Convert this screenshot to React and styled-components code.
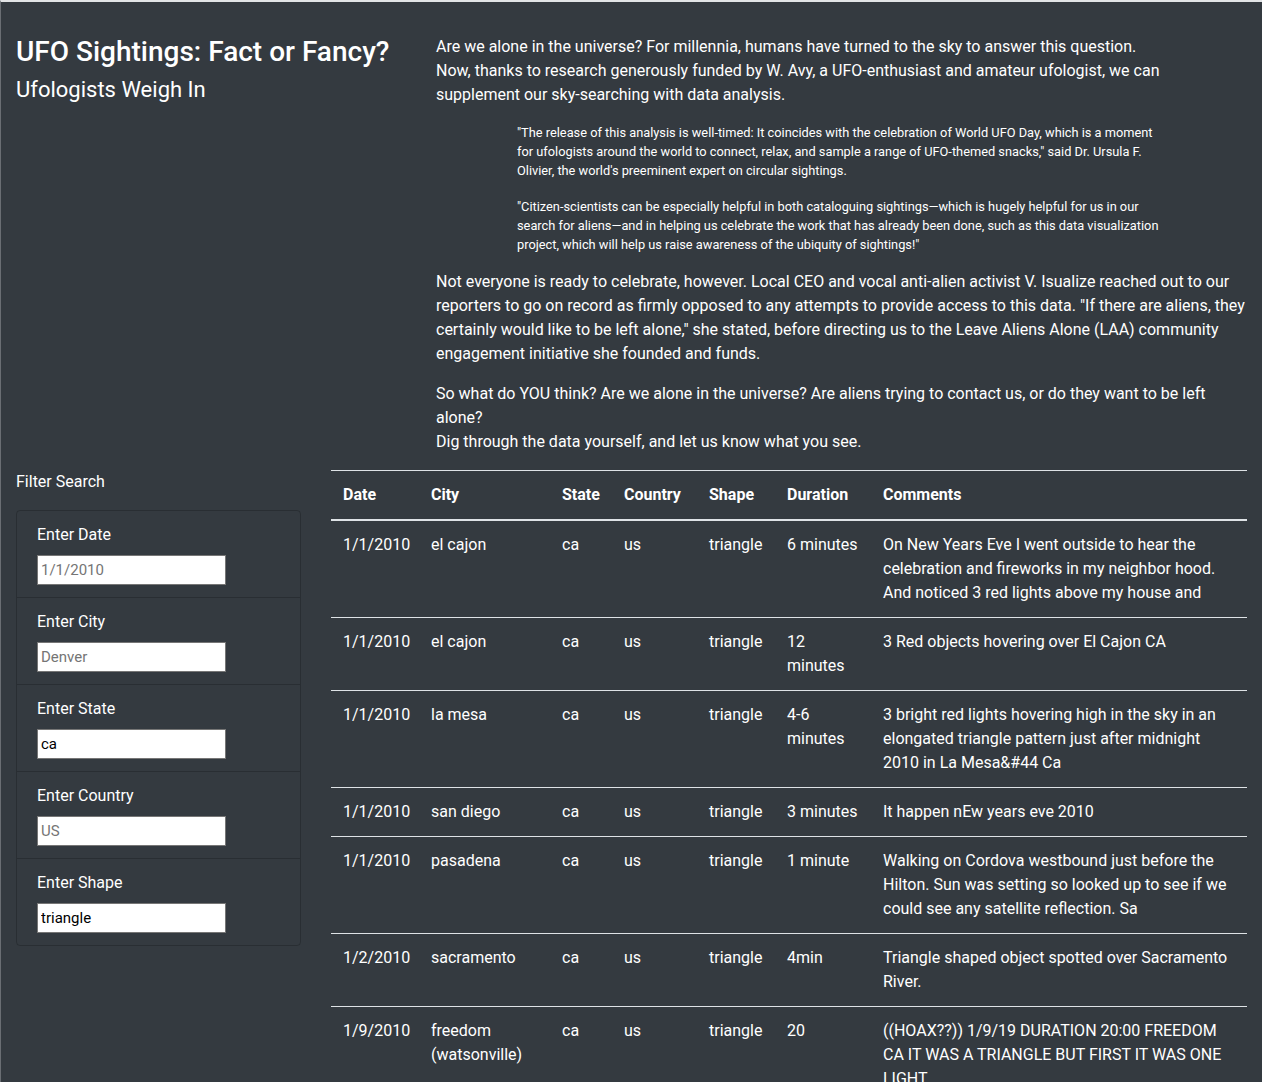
import React from 'react';
import styled, { createGlobalStyle } from 'styled-components';

const GlobalStyle = createGlobalStyle`
  html, body {
    margin: 0;
    padding: 0;
  }
  body {
    background: #343a40;
    color: #fff;
    font-family: Roboto, "Liberation Sans", sans-serif;
    font-size: 16px;
    line-height: 1.5;
    border-top: 2px solid #e2e4e6;
    border-left: 1px solid #6a6e73;
    min-height: 1080px;
    box-sizing: border-box;
  }
  * {
    box-sizing: border-box;
  }
`;

const Page = styled.div`
  padding: 33px 15px 0;
`;

const Row = styled.div`
  display: grid;
  grid-template-columns: ${(p) => p.cols};
  column-gap: 30px;
`;

const Title = styled.h1`
  margin: 0 0 8px;
  font-size: 28px;
  font-weight: 500;
  line-height: 1.2;
`;

const Subtitle = styled.h2`
  margin: 0;
  font-size: 22px;
  font-weight: 400;
  line-height: 1.2;
`;

const Para = styled.p`
  margin: 0 0 16px;
`;

const Quote = styled.blockquote`
  margin: 0 0 16px 81px;
  max-width: 651px;
  font-size: 12.8px;
  line-height: 19.2px;

  p {
    margin: 0 0 16px;
  }
  p:last-child {
    margin-bottom: 0;
  }
`;

const FilterTitle = styled.div`
  margin-bottom: 16px;
`;

const Card = styled.div`
  border: 1px solid rgba(0, 0, 0, 0.2);
  border-radius: 4px;
`;

const FilterItem = styled.div`
  padding: 12px 20px;
  border-bottom: 1px solid rgba(0, 0, 0, 0.2);

  &:last-child {
    border-bottom: none;
  }
`;

const Label = styled.label`
  display: block;
  margin-bottom: 8px;
`;

const Input = styled.input`
  display: block;
  width: 189px;
  height: 30px;
  padding: 1px 3px;
  border: 1px solid #767676;
  background: #fff;
  color: #000;
  font-family: inherit;
  font-size: 15px;
  outline: none;

  &::placeholder {
    color: #757575;
  }
`;

const Table = styled.table`
  width: 100%;
  border-collapse: collapse;
  table-layout: fixed;
`;

const Th = styled.th`
  padding: 12px;
  text-align: left;
  vertical-align: bottom;
  font-weight: 700;
  border-top: 1px solid #dee2e6;
  border-bottom: 2px solid #dee2e6;
`;

const Td = styled.td`
  padding: 12px;
  vertical-align: top;
  border-top: 1px solid #dee2e6;
`;

const columns = [
  { name: 'Date', width: 88 },
  { name: 'City', width: 131 },
  { name: 'State', width: 62 },
  { name: 'Country', width: 85 },
  { name: 'Shape', width: 78 },
  { name: 'Duration', width: 96 },
  { name: 'Comments', width: 376 },
];

const sightings = [
  ['1/1/2010', 'el cajon', 'ca', 'us', 'triangle', '6 minutes', 'On New Years Eve I went outside to hear the celebration and fireworks in my neighbor hood. And noticed 3 red lights above my house and'],
  ['1/1/2010', 'el cajon', 'ca', 'us', 'triangle', '12 minutes', '3 Red objects hovering over El Cajon CA'],
  ['1/1/2010', 'la mesa', 'ca', 'us', 'triangle', '4-6 minutes', '3 bright red lights hovering high in the sky in an elongated triangle pattern just after midnight 2010 in La Mesa&#44 Ca'],
  ['1/1/2010', 'san diego', 'ca', 'us', 'triangle', '3 minutes', 'It happen nEw years eve 2010'],
  ['1/1/2010', 'pasadena', 'ca', 'us', 'triangle', '1 minute', 'Walking on Cordova westbound just before the Hilton. Sun was setting so looked up to see if we could see any satellite reflection. Sa'],
  ['1/2/2010', 'sacramento', 'ca', 'us', 'triangle', '4min', 'Triangle shaped object spotted over Sacramento River.'],
  ['1/9/2010', 'freedom (watsonville)', 'ca', 'us', 'triangle', '20', '((HOAX??)) 1/9/19 DURATION 20:00 FREEDOM CA IT WAS A TRIANGLE BUT FIRST IT WAS ONE LIGHT'],
];

const filters = [
  { id: 'datetime', label: 'Enter Date', placeholder: '1/1/2010' },
  { id: 'city', label: 'Enter City', placeholder: 'Denver' },
  { id: 'state', label: 'Enter State', value: 'ca' },
  { id: 'country', label: 'Enter Country', placeholder: 'US' },
  { id: 'shape', label: 'Enter Shape', value: 'triangle' },
];

export default function App() {
  return (
    <Page>
      <GlobalStyle />
      <Row cols="390px 1fr">
        <div>
          <Title>UFO Sightings: Fact or Fancy?</Title>
          <Subtitle>Ufologists Weigh In</Subtitle>
        </div>
        <div>
          <Para>
            Are we alone in the universe? For millennia, humans have turned to the sky to answer this question.
            <br />
            Now, thanks to research generously funded by W. Avy, a UFO-enthusiast and amateur ufologist, we can supplement our sky-searching with data analysis.
          </Para>
          <Quote>
            <p>
              "The release of this analysis is well-timed: It coincides with the celebration of World UFO Day, which is a moment for ufologists around the world to connect, relax, and sample a range of UFO-themed snacks," said Dr. Ursula F. Olivier, the world's preeminent expert on circular sightings.
            </p>
            <p>
              "Citizen-scientists can be especially helpful in both cataloguing sightings—which is hugely helpful for us in our search for aliens—and in helping us celebrate the work that has already been done, such as this data visualization project, which will help us raise awareness of the ubiquity of sightings!"
            </p>
          </Quote>
          <Para>
            Not everyone is ready to celebrate, however. Local CEO and vocal anti-alien activist V. Isualize reached out to our reporters to go on record as firmly opposed to any attempts to provide access to this data. "If there are aliens, they certainly would like to be left alone," she stated, before directing us to the Leave Aliens Alone (LAA) community engagement initiative she founded and funds.
          </Para>
          <Para>
            So what do YOU think? Are we alone in the universe? Are aliens trying to contact us, or do they want to be left alone?
            <br />
            Dig through the data yourself, and let us know what you see.
          </Para>
        </div>
      </Row>
      <Row cols="285px 1fr">
        <div>
          <FilterTitle>Filter Search</FilterTitle>
          <Card>
            {filters.map((f) => (
              <FilterItem key={f.id}>
                <Label htmlFor={f.id}>{f.label}</Label>
                <Input id={f.id} type="text" placeholder={f.placeholder} defaultValue={f.value} />
              </FilterItem>
            ))}
          </Card>
        </div>
        <Table>
          <colgroup>
            {columns.map((c) => (
              <col key={c.name} style={{ width: c.width }} />
            ))}
          </colgroup>
          <thead>
            <tr>
              {columns.map((c) => (
                <Th key={c.name}>{c.name}</Th>
              ))}
            </tr>
          </thead>
          <tbody>
            {sightings.map((row, i) => (
              <tr key={i}>
                {row.map((cell, j) => (
                  <Td key={j}>{cell}</Td>
                ))}
              </tr>
            ))}
          </tbody>
        </Table>
      </Row>
    </Page>
  );
}
